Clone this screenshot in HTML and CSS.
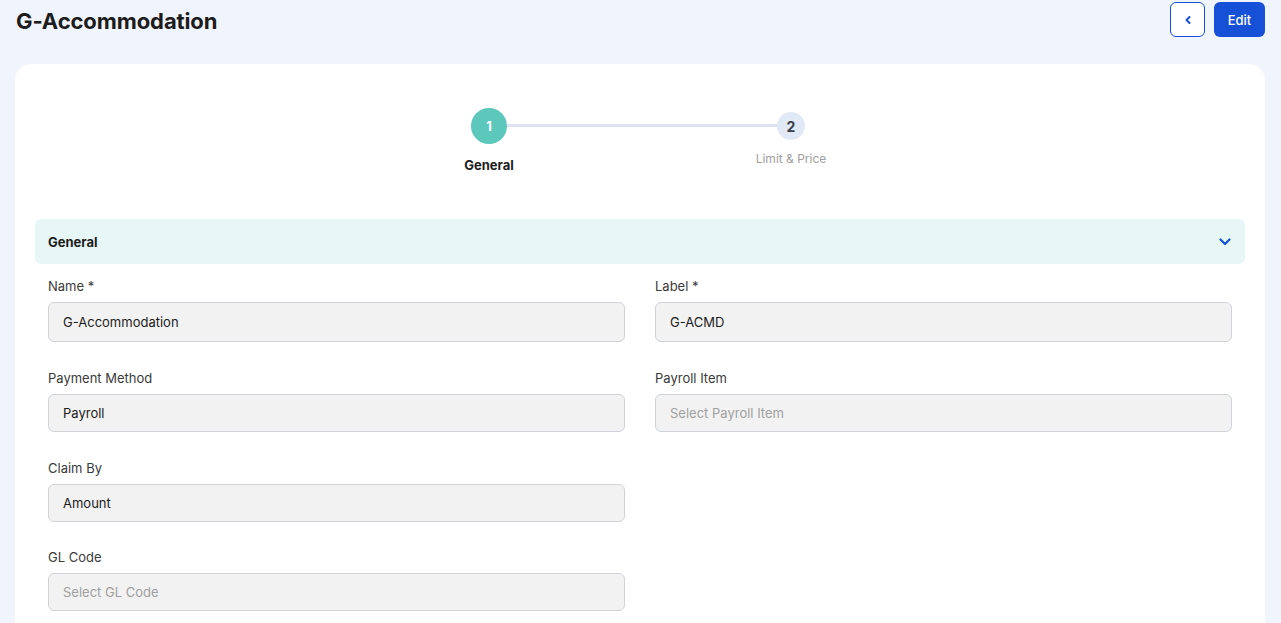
FILE: index.html
```html
<!DOCTYPE html>
<html lang="en">
<head>
    <meta charset="UTF-8">
    <meta name="viewport" content="width=device-width, initial-scale=1.0">
    <title>G-Accommodation</title>
    <link rel="stylesheet" href="styles.css">
</head>
<body>
    <!-- Page Header -->
    <header class="page-header">
        <h1>G-Accommodation</h1>
        <div class="header-actions">
            <button class="btn-back" aria-label="Back">
                <svg width="10" height="10" viewBox="0 0 10 10"><path d="M6.5 2 L3.5 5 L6.5 8" fill="none" stroke="#1650d6" stroke-width="2" stroke-linecap="round" stroke-linejoin="round"/></svg>
            </button>
            <button class="btn-edit">Edit</button>
        </div>
    </header>

    <div class="card">
        <!-- Stepper -->
        <div class="stepper">
            <div class="step active">
                <div class="step-circle">1</div>
                <div class="step-label">General</div>
            </div>
            <div class="step-line"></div>
            <div class="step">
                <div class="step-circle">2</div>
                <div class="step-label">Limit &amp; Price</div>
            </div>
        </div>

        <!-- General Section -->
        <div class="section-head">
            <span>General</span>
            <svg width="14" height="14" viewBox="0 0 14 14"><path d="M2.5 4.5 L7 9 L11.5 4.5" fill="none" stroke="#1650d6" stroke-width="2.2" stroke-linecap="round" stroke-linejoin="round"/></svg>
        </div>

        <div class="form-grid">
            <div class="form-group first-row">
                <label>Name *</label>
                <div class="form-control tall">G-Accommodation</div>
            </div>
            <div class="form-group first-row">
                <label>Label *</label>
                <div class="form-control tall">G-ACMD</div>
            </div>
            <div class="form-group">
                <label>Payment Method</label>
                <div class="form-control">Payroll</div>
            </div>
            <div class="form-group">
                <label>Payroll Item</label>
                <div class="form-control placeholder">Select Payroll Item</div>
            </div>
            <div class="form-group">
                <label>Claim By</label>
                <div class="form-control">Amount</div>
            </div>
            <div class="form-group"></div>
            <div class="form-group">
                <label>GL Code</label>
                <div class="form-control placeholder">Select GL Code</div>
            </div>
        </div>
    </div>
</body>
</html>
```

FILE: styles.css
```css
/* General Styling */
body {
    font-family: 'Inter', 'Noto Sans', sans-serif;
    background-color: #f0f4fc;
    color: #222;
    margin: 0;
    padding: 0;
}

/* Header */
.page-header {
    display: flex;
    justify-content: space-between;
    align-items: flex-start;
    padding: 2px 16px 0 16px;
    height: 62px;
}

.page-header h1 {
    font-size: 22px;
    font-weight: 700;
    margin: 6px 0 0 0;
    color: #1c1c1c;
    letter-spacing: -0.1px;
}

.header-actions {
    display: flex;
    gap: 9px;
}

.btn-back {
    width: 35px;
    height: 35px;
    background: #fff;
    border: 1px solid #1650d6;
    border-radius: 6px;
    display: flex;
    align-items: center;
    justify-content: center;
    padding: 0;
}

.btn-edit {
    width: 51px;
    height: 35px;
    background: #1650d6;
    color: #fff;
    border: none;
    border-radius: 6px;
    font-family: inherit;
    font-size: 13px;
    font-weight: 500;
}

/* Card */
.card {
    background: #fff;
    margin: 0 16px 0 15px;
    border-radius: 16px 16px 0 0;
    padding: 44px 20px 20px 20px;
    min-height: 600px;
}

/* Stepper */
.stepper {
    display: flex;
    justify-content: center;
    align-items: flex-start;
    height: 111px;
}

.step {
    width: 120px;
    display: flex;
    flex-direction: column;
    align-items: center;
    position: relative;
    z-index: 1;
}

.step-circle {
    width: 28px;
    height: 28px;
    margin-top: 4px;
    border-radius: 50%;
    background: #e2e9f6;
    color: #3a3f4a;
    font-size: 14px;
    font-weight: 700;
    display: flex;
    align-items: center;
    justify-content: center;
}

.step-label {
    margin-top: 11px;
    font-size: 12px;
    color: #a0a0a0;
}

.step.active .step-circle {
    width: 36px;
    height: 36px;
    margin-top: 0;
    background: #5bc8bb;
    color: #fff;
    font-size: 13px;
}

.step.active .step-label {
    margin-top: 13px;
    font-size: 13px;
    font-weight: 700;
    color: #1c1c1c;
}

.step-line {
    flex: none;
    width: 270px;
    height: 3px;
    margin: 16px -46px 0 -42px;
    background: #dfe3ef;
}

/* Section header */
.section-head {
    display: flex;
    justify-content: space-between;
    align-items: center;
    height: 45px;
    padding: 0 13px 0 13px;
    background: #e7f7f5;
    border-radius: 6px;
    font-size: 13px;
    font-weight: 700;
    color: #1c1c1c;
}

/* Form */
.form-grid {
    display: grid;
    grid-template-columns: 1fr 1fr;
    column-gap: 30px;
    padding: 0 13px;
}

.form-group {
    height: 89.5px;
}

.form-group.first-row {
    height: 92px;
}

.form-group label {
    display: block;
    margin-top: 14px;
    font-size: 13px;
    color: #3a3a3a;
    height: 16px;
}

.form-control {
    box-sizing: border-box;
    margin-top: 8px;
    height: 38px;
    background: #f2f2f2;
    border: 1px solid #cfd3d8;
    border-radius: 6px;
    padding: 0 14px;
    font-size: 13px;
    display: flex;
    align-items: center;
    color: #1c1c1c;
}

.form-control.tall {
    height: 40px;
}

.form-control.placeholder {
    color: #a0a0a0;
}
```
